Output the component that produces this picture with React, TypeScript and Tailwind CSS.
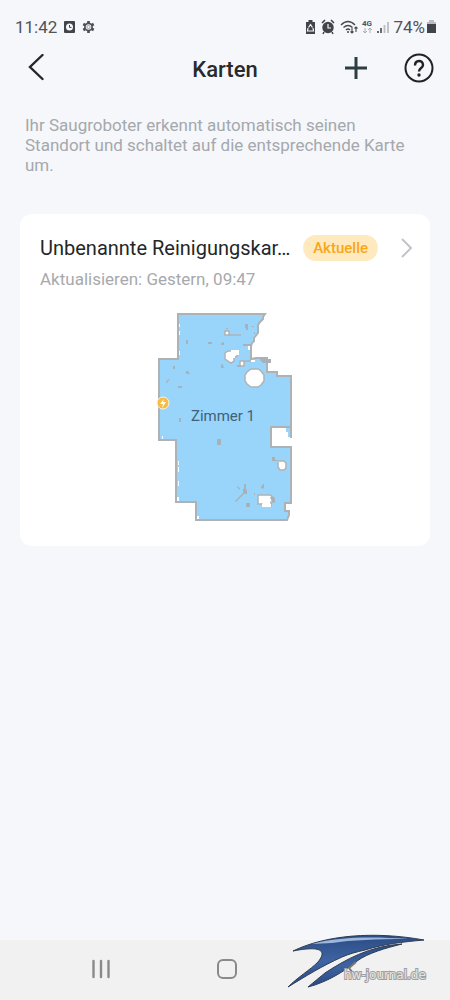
import React from 'react';

function StatusBar() {
  return (
    <div className="flex h-[46px] items-center justify-between pt-2 pr-[14px] pl-[15px] text-[#505357]">
      <div className="flex items-center">
        <span className="text-[17px] leading-5">11:42</span>
        <svg className="ml-[7px] h-[14px] w-[11px]" viewBox="0 0 11 14">
          <rect x="0" y="1" width="11" height="12" rx="1" fill="#414549" />
          <circle cx="5.5" cy="7" r="3.5" fill="#f5f7fb" />
          <path d="M5.5 5v2.4h2" fill="none" stroke="#414549" />
        </svg>
        <svg className="ml-[7px] h-[14px] w-[13px]" viewBox="0 0 13 14">
          <path
            d="M6.500 1v12M1.300 4l10.400 6M1.300 10l10.400-6"
            stroke="#4b4e52"
            strokeWidth="2.6"
          />
          <circle cx="6.5" cy="7" r="3.6" fill="#f5f7fb" stroke="#4b4e52" strokeWidth="1.6" />
          <circle cx="6.5" cy="7" r="1.6" fill="none" stroke="#8b8e92" strokeWidth="0.8" />
        </svg>
      </div>
      <div className="flex items-center">
        <svg className="h-[16px] w-[83px]" viewBox="0 0 83 16">
          {/* battery saver */}
          <path d="M0 3h2.500V1h4v2H9v12H0z" fill="#414549" />
          <path d="M2.500 8.500l2-3 2 3M2 9l-.5 3h6L7 9" fill="none" stroke="#f5f7fb" strokeWidth="1.2" />
          {/* alarm */}
          <circle cx="22" cy="8.5" r="5.7" fill="#414549" />
          <path d="M16 4l3-3M25 1l3 3M18 13l-1 2M26 13l1 2" stroke="#414549" strokeWidth="1.6" />
          <path d="M22 5V9h3" fill="none" stroke="#f5f7fb" strokeWidth="1.2" />
          {/* wifi */}
          <g fill="none" stroke="#45494d" strokeWidth="1.4">
            <path d="M35 6Q42-1 49 6M37.500 8.500q4.500-4 9 0M40 11q2-2 4 0" />
            <path d="M46 9v5M44.500 12.500l1.500 1.500 1.500-1.500M50 13V8M48.500 9.500L50 8l1.500 1.500" strokeWidth="1.1" />
          </g>
          <circle cx="42" cy="13" r="1" fill="#45494d" />
          {/* network */}
          <text x="56" y="7" fontSize="8" fontWeight="700" fill="#505357">4G</text>
          <path d="M59 9v5M57 12l2 2 2-2M64 14V9M62 11l2-2 2 2" fill="none" stroke="#aaadb0" />
          <path d="M72 14v-2M75 14V9" stroke="#45494d" strokeWidth="1.6" />
          <path d="M78.500 14V6M82 14V3" stroke="#babdc1" strokeWidth="1.8" />
        </svg>
        <span className="ml-1 text-[17px] leading-5">74%</span>
        <svg className="ml-[2px] h-[14px] w-[9px]" viewBox="0 0 9 14">
          <path d="M0 2h2V0h5v2h2v11H0z" fill="#babdc1" />
          <path d="M0 4h9v9H0z" fill="#414549" />
        </svg>
      </div>
    </div>
  );
}

function RoomMap() {
  return (
    <svg className="mx-auto mt-[15px] h-[225px] w-[150px]" viewBox="0 0 150 225" role="img" aria-label="Zimmer 1">
      <path
        d="M28 9H115L113 12V14L110 17L108 20V28L104 33V36L102 38L101 41V54L106 53H117V67H127V71H141V122H121V142H141V198H135V206H139V210L137 215H46V197H26V135H9V54H28Z"
        fill="#99d5fb"
        stroke="#adb2b7"
        strokeWidth="2"
      />
      {/* wall end beside the open corner */}
      <path d="M136 123h4v9h-2v-5h-2z" fill="#99d5fb" />
      <path d="M141 121v12" stroke="#adb2b7" strokeWidth="2" />
      {/* obstacles */}
      <g fill="#fff" stroke="#adb2b7" strokeWidth="1.5">
        <path d="M101 64h7l3 2 3 4v6l-3 4-3 2h-7l-4-3-2-3v-6l2-3z" />
        <path d="M75 48l3-2h9v5l-3 2v3l-3 2-3-2-3-2z" />
        <path d="M75 26h4v4h-4zM79 30h12M90 56h4v5h-4zM94 56h8" />
        <path d="M123 155l5 1h6l2 2v5l-2 2h-4l-2-3v-5" />
        <path d="M108 190h12l4 3v4h-3v4h-8l-1-2h-4z" />
      </g>
      <g fill="#fff">
        <path d="M81 45h8v5h-4v3h-4zM112 199h9v3h-9z" />
        <path d="M29 19h1v3h-1zM29 26h1v4h-1zM29 46h1v4h-1zM98 41h2v4h-2zM101 55h4v2h-4zM28 156h1v4h-1zM28 162h1v5h-1zM28 176h1v5h-1zM27 192h2v4h-2zM12 131h1v3h-1zM47 211h2v3h-2z" />
      </g>
      <g fill="#a9b1b8">
        <path d="M95 19h3v6h-2v-2h-1zM102 21h2v1h-2zM104 27h1v2h-1zM76 23h2v1h-2zM36 35h2v4h-2zM58 37h4v2h-4zM71 38l3-1v3h-3zM93 39h9v2h-9zM71 59l2 1 1 3h-3zM87 60h4v2h-4zM110 52h6v2h5v4h-8l-3-3zM23 61h2v3h-2zM36 66h2l2 3h-4zM17 75l3-1-3 4h-1zM28 81h4v2h-4zM29 113h2v4h-2zM67 134h4v6h-4zM122 152h3v4h-3z" />
        <path d="M94 179h2v6h1v4h-3l-8 8-1-1 8-8v-4h1zM87 181l3 2v2l-3-3zM113 179h1v4l-2 1-1-2zM104 188h1v2h-1zM96 198h4v4h-4zM120 192h4l1 3v2h-3z" />
      </g>
      <text x="73" y="116" textAnchor="middle" fontSize="15" fill="#3f6179">Zimmer 1</text>
      <circle cx="13" cy="98" r="6" fill="#f6bd45" stroke="#fff3d9" strokeWidth="1" />
      <path d="M14 94l-4 5h3l-1 4 4-6h-3z" fill="#fff" />
    </svg>
  );
}

function Watermark() {
  return (
    <svg className="pointer-events-none absolute right-0 bottom-0 h-[75px] w-[180px]" viewBox="0 0 180 75">
      <defs>
        <linearGradient id="wing" x1="0" y1="0" x2="0" y2="1">
          <stop offset="0" stopColor="#2b4c84" />
          <stop offset=".5" stopColor="#3f64a3" />
          <stop offset="1" stopColor="#274a85" />
        </linearGradient>
      </defs>
      <path
        d="M23 26C56 10 104 6 154 15C132 17 114 19 95 25C86 27 79 29 72 32C52 41 36 51 18 62C28 52 40 45 48 37C56 27 54 20 23 26Z"
        fill="url(#wing)"
        stroke="#2f3d53"
        strokeWidth="1"
      />
      <path d="M42 19C72 11 106 12 138 14C106 14 82 15 62 18Z" fill="#9db8dc" />
      <path
        d="M132 19C99 21 75 35 55 48C50 52 44 57 38 62C58 57 76 45 87 36C98 28 116 23 132 19Z"
        fill="url(#wing)"
        stroke="#2f3d53"
        strokeWidth="1"
      />
      <path d="M86 37l-7 6 8 10" fill="none" stroke="#777" strokeWidth="2" />
      <text
        x="74"
        y="54"
        fontSize="12"
        fill="#e4e4e4"
        stroke="#a0a0a0"
        strokeWidth="2"
        paintOrder="stroke"
        className="font-['DejaVu_Sans',sans-serif]"
      >
        hw-journal.de
      </text>
    </svg>
  );
}

export default function App() {
  return (
    <div className="relative flex min-h-screen flex-col bg-[#f5f7fb] font-['Roboto',sans-serif]">
      <StatusBar />

      <header className="grid h-11 grid-cols-[1fr_auto_1fr] items-center px-4">
        <button type="button" aria-label="Zurück" className="flex h-10 w-10 items-center justify-center">
          <svg className="h-7 w-5" viewBox="0 0 20 28" fill="none" stroke="#242628" strokeWidth="2.4">
            <path d="M16.500 1L4 13L16.500 25" strokeLinecap="round" />
          </svg>
        </button>
        <h1 className="pt-1 text-[22px] leading-7 font-medium text-[#282a2c]">Karten</h1>
        <div className="flex items-center justify-end gap-9">
          <button type="button" aria-label="Karte hinzufügen">
            <svg className="h-6 w-6" viewBox="0 0 24 24" stroke="#2d3e43" strokeWidth="3">
              <path d="M12 1v22M1 12h22" />
            </svg>
          </button>
          <button type="button" aria-label="Hilfe">
            <svg className="h-[30px] w-[30px]" viewBox="0 0 30 30" fill="none" stroke="#1f2224" strokeWidth="2">
              <circle cx="15" cy="15" r="13.500" />
              <path d="M11 12.500C11 6.500 19 6.500 19 12C19 15 15 15 15 18.500" strokeWidth="2.4" />
              <circle cx="15" cy="22" r="1" fill="#1f2224" strokeWidth="1.4" />
            </svg>
          </button>
        </div>
      </header>

      <main className="flex-1 px-5">
        <p className="mt-[25px] px-[5px] text-[17px] leading-[20px] text-[#a5a8ac]">
          Ihr Saugroboter erkennt automatisch seinen Standort und schaltet auf die entsprechende Karte um.
        </p>

        <section className="mt-[39px] rounded-xl bg-white px-5 pt-5 pb-4">
          <div className="flex items-center">
            <h2 className="text-[20px] leading-7 whitespace-nowrap text-[#242628]">Unbenannte Reinigungskar…</h2>
            <span className="ml-auto rounded-full bg-[#ffeabf] px-[10px] text-[15px] leading-[26px] font-medium text-[#f9a617]">
              Aktuelle
            </span>
            <button type="button" aria-label="Karte öffnen" className="-mr-1 ml-[22px] shrink-0">
              <svg className="h-5 w-[14px]" viewBox="0 0 14 20" fill="none" stroke="#c1c3c6" strokeWidth="2">
                <path d="M2 1l9 9-9 9" />
              </svg>
            </button>
          </div>
          <p className="mt-[6px] text-[17px] leading-[22px] text-[#a7a9ac]">Aktualisieren: Gestern, 09:47</p>
          <RoomMap />
        </section>
      </main>

      <nav className="flex h-[60px] items-center bg-[#f1f1f1] pb-[2px] pl-[92px]">
        <button type="button" aria-label="Letzte Apps">
          <svg className="h-5 w-[18px]" viewBox="0 0 18 20" stroke="#8a8a8a" strokeWidth="2.4" strokeLinecap="round">
            <path d="M1.500 2v16M9 2v16M16.500 2v16" />
          </svg>
        </button>
        <button type="button" aria-label="Startbildschirm" className="ml-[107px]">
          <svg className="h-5 w-5" viewBox="0 0 20 20" fill="none" stroke="#8a8a8a" strokeWidth="2">
            <rect x="1" y="1" width="18" height="18" rx="5" />
          </svg>
        </button>
      </nav>
      <Watermark />
    </div>
  );
}
